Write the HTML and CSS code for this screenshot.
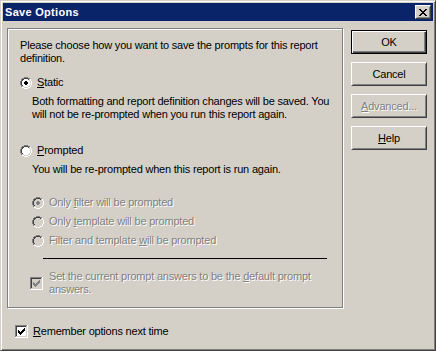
FILE: index.html
```html
<!DOCTYPE html>
<html lang="en">
<head>
    <meta charset="UTF-8">
    <meta name="viewport" content="width=device-width, initial-scale=1.0">
    <title>Save Options</title>
    <link rel="stylesheet" href="styles.css">
</head>
<body>
    <!-- classic 3d control bitmaps -->
    <svg class="sprite" xmlns="http://www.w3.org/2000/svg">
        <symbol id="ring" viewBox="0 0 12 12">
            <path fill="#808080" d="M4 0h4v1H4z M2 1h2v1H2z M8 1h2v1H8z M1 2h1v2H1z M0 4h1v4H0z M1 8h1v2H1z"/>
            <path fill="#fff" d="M10 2h1v2h-1z M11 4h1v4h-1z M10 8h1v2h-1z M2 10h2v1H2z M8 10h2v1H8z M4 11h4v1H4z"/>
            <path fill="#404040" d="M4 1h4v1H4z M2 2h2v1H2z M8 2h1v1H8z M2 3h1v1H2z M1 4h1v4H1z M2 8h1v1H2z"/>
            <path fill="#d4d0c8" d="M9 2h1v2H9z M10 4h1v4h-1z M9 8h1v1H9z M2 9h2v1H2z M8 9h2v1H8z M4 10h4v1H4z"/>
        </symbol>
        <symbol id="ring-well" viewBox="0 0 12 12">
            <path d="M4 2h4v1H4z M3 3h6v1H3z M2 4h8v4H2z M3 8h6v1H3z M4 9h4v1H4z"/>
        </symbol>
        <symbol id="ring-dot" viewBox="0 0 12 12">
            <path d="M5 4h2v1H5z M4 5h4v2H4z M5 7h2v1H5z"/>
        </symbol>
        <symbol id="box" viewBox="0 0 13 13">
            <path fill="#808080" d="M0 0h12v1H0z M0 1h1v11H0z"/>
            <path fill="#fff" d="M12 0h1v13h-1z M0 12h12v1H0z"/>
            <path fill="#404040" d="M1 1h10v1H1z M1 2h1v9H1z"/>
            <path fill="#d4d0c8" d="M11 1h1v11h-1z M1 11h10v1H1z"/>
        </symbol>
        <symbol id="box-well" viewBox="0 0 13 13">
            <path d="M2 2h9v9H2z"/>
        </symbol>
        <symbol id="tick" viewBox="0 0 13 13">
            <path d="M3 5h1v3H3z M4 6h1v3H4z M5 7h1v3H5z M6 6h1v3H6z M7 5h1v3H7z M8 4h1v3H8z M9 3h1v3H9z"/>
        </symbol>
    </svg>

    <div class="window">
        <div class="titlebar">
            <span class="title">Save Options</span>
            <span class="close">
                <svg width="8" height="7" viewBox="0 0 8 7"><path d="M0 0h2v1H0z M6 0h2v1H6z M1 1h2v1H1z M5 1h2v1H5z M2 2h4v1H2z M3 3h2v1H3z M2 4h4v1H2z M1 5h2v1H1z M5 5h2v1H5z M0 6h2v1H0z M6 6h2v1H6z"/></svg>
            </span>
        </div>

        <div class="client">
            <div class="left">
                <div class="group">
                    <p class="intro">Please choose how you want to save the prompts for this report<br>definition.</p>

                    <div class="option option-static">
                        <svg class="radio"><use href="#ring"/><use href="#ring-well" class="well"/><use href="#ring-dot" class="dot"/></svg>
                        <span><u>S</u>tatic</span>
                    </div>
                    <p class="desc">Both formatting and report definition changes will be saved. You<br>will not be re-prompted when you run this report again.</p>

                    <div class="option option-prompted">
                        <svg class="radio"><use href="#ring"/><use href="#ring-well" class="well"/></svg>
                        <span><u>P</u>rompted</span>
                    </div>
                    <p class="desc">You will be re-prompted when this report is run again.</p>

                    <div class="suboptions disabled">
                        <div class="option">
                            <svg class="radio"><use href="#ring"/><use href="#ring-well" class="well"/><use href="#ring-dot" class="dot"/></svg>
                            <span>Only <u>f</u>ilter will be prompted</span>
                        </div>
                        <div class="option">
                            <svg class="radio"><use href="#ring"/><use href="#ring-well" class="well"/></svg>
                            <span>Only <u>t</u>emplate will be prompted</span>
                        </div>
                        <div class="option">
                            <svg class="radio"><use href="#ring"/><use href="#ring-well" class="well"/></svg>
                            <span>Filter and template <u>w</u>ill be prompted</span>
                        </div>
                    </div>

                    <hr class="rule">

                    <div class="checkrow default-answers disabled">
                        <svg class="checkbox"><use href="#box"/><use href="#box-well" class="well"/><use href="#tick" class="dot"/></svg>
                        <span>Set the current prompt answers to be the <u>d</u>efault prompt<br>answers.</span>
                    </div>
                </div>

                <div class="checkrow remember">
                    <svg class="checkbox"><use href="#box"/><use href="#box-well" class="well"/><use href="#tick" class="dot"/></svg>
                    <span><u>R</u>emember options next time</span>
                </div>
            </div>

            <div class="buttons">
                <button class="btn default">OK</button>
                <button class="btn">Cancel</button>
                <button class="btn" disabled><u>A</u>dvanced...</button>
                <button class="btn"><u>H</u>elp</button>
            </div>
        </div>
    </div>
</body>
</html>
```

FILE: styles.css
```css
body {
    margin: 0;
    font-family: "Liberation Sans", Arial, sans-serif;
    font-size: 11px;
    letter-spacing: -0.2px;
    color: #000;
}

p {
    margin: 0;
}

.sprite {
    display: none;
}

svg {
    shape-rendering: crispEdges;
}

.window {
    width: 436px;
    height: 351px;
    box-sizing: border-box;
    border: 1px solid;
    border-color: #d4d0c8 #404040 #404040 #d4d0c8;
    padding: 2px;
    box-shadow: inset 1px 1px #fff, inset -1px -1px #808080;
    background: #d4d0c8;
}

/* title bar */
.titlebar {
    height: 18px;
    background: #0a246a;
    color: #fff;
    display: flex;
    align-items: center;
    justify-content: space-between;
    padding: 0 2px;
}

.title {
    font-weight: bold;
    letter-spacing: 0.3px;
}

.close {
    width: 16px;
    height: 14px;
    box-sizing: border-box;
    border: 1px solid;
    border-color: #fff #404040 #404040 #fff;
    box-shadow: inset 1px 1px #d4d0c8, inset -1px -1px #808080;
    background: #d4d0c8;
    display: flex;
    align-items: center;
    justify-content: center;
}

.close svg {
    display: block;
}

/* body of the dialog */
.client {
    display: flex;
    gap: 8px;
    padding: 7px 0 0 4px;
}

.left {
    width: 336px;
}

.group {
    height: 280px;
    box-sizing: border-box;
    border: 1px solid #808080;
    box-shadow: 1px 1px 0 #fff, inset 1px 1px 0 #fff;
    padding: 10px 12px 0 12px;
    line-height: 13px;
}

.option {
    display: flex;
    align-items: center;
    gap: 5px;
    height: 13px;
}

.option-static {
    margin-top: 11px;
}

.option-prompted {
    margin-top: 23px;
}

.desc {
    margin: 6px 0 0 12px;
}

.suboptions {
    margin: 20px 0 0 12px;
    display: flex;
    flex-direction: column;
    gap: 6px;
}

.rule {
    margin: 11px 0 0 23px;
    width: 284px;
    height: 0;
    border: 0;
    border-top: 1px solid #000;
}

.radio {
    width: 12px;
    height: 12px;
    flex: none;
}

.checkbox {
    width: 13px;
    height: 13px;
    flex: none;
}

.well { fill: #fff; }
.dot { fill: #000; }

.checkrow {
    display: flex;
    align-items: center;
    line-height: 13px;
}

.default-answers {
    margin: 11px 0 0 10px;
    gap: 6px;
}

.remember {
    margin: 17px 0 0 8px;
    gap: 5px;
}

/* greyed out controls */
.disabled {
    color: #808080;
    text-shadow: 1px 1px 0 #fff;
}

.disabled .well { fill: #d4d0c8; }
.disabled .dot { fill: #808080; }

/* push buttons */
.buttons {
    display: flex;
    flex-direction: column;
    gap: 8px;
    padding-top: 2px;
}

.btn {
    width: 76px;
    height: 24px;
    box-sizing: border-box;
    padding: 0;
    border: 1px solid;
    border-color: #fff #404040 #404040 #fff;
    box-shadow: inset 1px 1px #d4d0c8, inset -1px -1px #808080;
    background: #d4d0c8;
    font: inherit;
    letter-spacing: inherit;
    color: #000;
}

.btn.default {
    border-color: #000;
    box-shadow: inset 1px 1px #fff, inset -1px -1px #404040, inset -2px -2px #808080;
}

.btn:disabled {
    color: #808080;
    text-shadow: 1px 1px 0 #fff;
}
```
